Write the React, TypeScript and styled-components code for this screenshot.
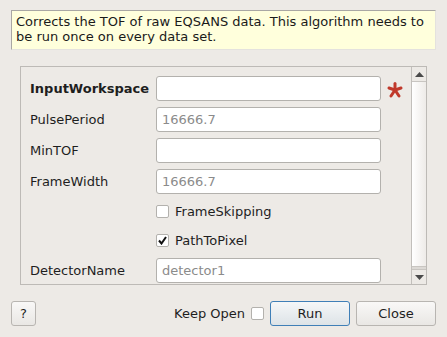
import styled, { createGlobalStyle } from 'styled-components';

const Global = createGlobalStyle`
	html, body {
		margin: 0;
		padding: 0;
		background: #edeae6;
		font-family: 'DejaVu Sans', 'Liberation Sans', sans-serif;
		font-size: 13px;
		color: #1e1e1e;
	}
`;

const Window = styled.div`
	width: 447px;
	height: 337px;
	padding: 10px 11px 0 11px;
	box-sizing: border-box;
	display: flex;
	flex-direction: column;
`;

const Description = styled.div`
	height: 40px;
	box-sizing: border-box;
	background: #ffffdc;
	border-top: 1px solid #a9a7a4;
	border-left: 1px solid #a9a7a4;
	border-right: 1px solid #e4e2de;
	border-bottom: 1px solid #e4e2de;
	padding: 3px 0 0 4px;
	line-height: 15px;
	color: #1a1a1a;
`;

const Group = styled.div`
	margin: 16px 9px 0 9px;
	height: 219px;
	box-sizing: border-box;
	border: 1px solid #bdbab6;
	display: flex;
`;

const Form = styled.div`
	flex: 1;
	padding: 9px 0 0 9px;
	display: grid;
	grid-template-columns: 126px 225px 22px;
	grid-auto-rows: min-content;
	row-gap: 6px;
	overflow: hidden;
`;

const Label = styled.div<{ $bold?: boolean }>`
	height: 25px;
	display: flex;
	align-items: center;
	font-weight: ${(p) => (p.$bold ? 'bold' : 'normal')};
`;

const Input = styled.div`
	height: 25px;
	box-sizing: border-box;
	background: #fff;
	border: 1px solid #b3b1ad;
	border-radius: 3px;
	padding: 0 5px;
	display: flex;
	align-items: center;
	color: #8b8b8b;
`;

const Marker = styled.div`
	display: flex;
	align-items: center;
	padding: 3px 0 0 6px;
`;

const CheckRow = styled.label`
	grid-column: 2 / 4;
	height: 23px;
	display: flex;
	align-items: center;
	gap: 6px;
`;

const Box = styled.span`
	width: 13px;
	height: 13px;
	box-sizing: border-box;
	background: #fff;
	border: 1px solid #b3b1ad;
	border-radius: 2px;
	display: inline-flex;
	align-items: center;
	justify-content: center;
`;

const Scrollbar = styled.div`
	width: 14px;
	border-left: 1px solid #c2bfbb;
	display: flex;
	flex-direction: column;
	background: #dcd9d5;
`;

const Arrow = styled.div`
	height: 14px;
	background: #edeae6;
	display: flex;
	align-items: center;
	justify-content: center;
	border-bottom: 1px solid #c8c5c1;
	&:last-child {
		border-bottom: none;
		border-top: 1px solid #c8c5c1;
	}
`;

const Thumb = styled.div`
	height: 184px;
	background: linear-gradient(to right, #ffffff, #eeebe8);
	border-bottom: 1px solid #c8c5c1;
`;

const Footer = styled.div`
	margin-top: 16px;
	display: flex;
	align-items: center;
	gap: 6px;
`;

const Button = styled.button<{ $primary?: boolean; $w: number }>`
	width: ${(p) => p.$w}px;
	height: 25px;
	box-sizing: border-box;
	font-family: inherit;
	font-size: 13px;
	color: #1e1e1e;
	border-radius: 3px;
	border: 1px solid ${(p) => (p.$primary ? '#3f7fb7' : '#b8b5b1')};
	background: ${(p) =>
		p.$primary
			? 'linear-gradient(#f5f7f8, #dde3e7)'
			: 'linear-gradient(#f9f8f7, #e9e7e4)'};
	padding: 0;
`;

const Spacer = styled.div`
	flex: 1;
`;

const KeepOpen = styled.div`
	display: flex;
	align-items: center;
	gap: 6px;
`;

const Triangle = ({ down }: { down?: boolean }) => (
	<svg width="9" height="5" viewBox="0 0 9 5">
		<polygon points={down ? '0,0 9,0 4.5,5' : '0,5 9,5 4.5,0'} fill="#4a4a4a" />
	</svg>
);

function App() {
	return (
		<Window>
			<Global />
			<Description>
				Corrects the TOF of raw EQSANS data. This algorithm needs to
				<br />
				be run once on every data set.
			</Description>
			<Group>
				<Form>
					<Label $bold>InputWorkspace</Label>
					<Input />
					<Marker>
						<svg width="16" height="16" viewBox="0 0 16 16">
							<g stroke="#c0392b" strokeWidth="3" strokeLinecap="round">
								<line x1="8" y1="1.5" x2="8" y2="8" />
								<line x1="8" y1="8" x2="2" y2="6" />
								<line x1="8" y1="8" x2="14" y2="6" />
								<line x1="8" y1="8" x2="4" y2="14" />
								<line x1="8" y1="8" x2="12" y2="14" />
							</g>
						</svg>
					</Marker>
					<Label>PulsePeriod</Label>
					<Input>16666.7</Input>
					<div />
					<Label>MinTOF</Label>
					<Input />
					<div />
					<Label>FrameWidth</Label>
					<Input>16666.7</Input>
					<div />
					<div />
					<CheckRow>
						<Box />
						FrameSkipping
					</CheckRow>
					<div />
					<CheckRow>
						<Box>
							<svg width="9" height="9" viewBox="0 0 9 9">
								<path d="M1 4.5 L3.5 7.5 L8 1" stroke="#111" strokeWidth="2" fill="none" />
							</svg>
						</Box>
						PathToPixel
					</CheckRow>
					<Label>DetectorName</Label>
					<Input>detector1</Input>
					<div />
				</Form>
				<Scrollbar>
					<Arrow>
						<Triangle />
					</Arrow>
					<Thumb />
					<Spacer />
					<Arrow>
						<Triangle down />
					</Arrow>
				</Scrollbar>
			</Group>
			<Footer>
				<Button $w={25}>?</Button>
				<Spacer />
				<KeepOpen>
					Keep Open
					<Box />
				</KeepOpen>
				<Button $primary $w={80}>
					Run
				</Button>
				<Button $w={80}>Close</Button>
			</Footer>
		</Window>
	);
}

export default App;
